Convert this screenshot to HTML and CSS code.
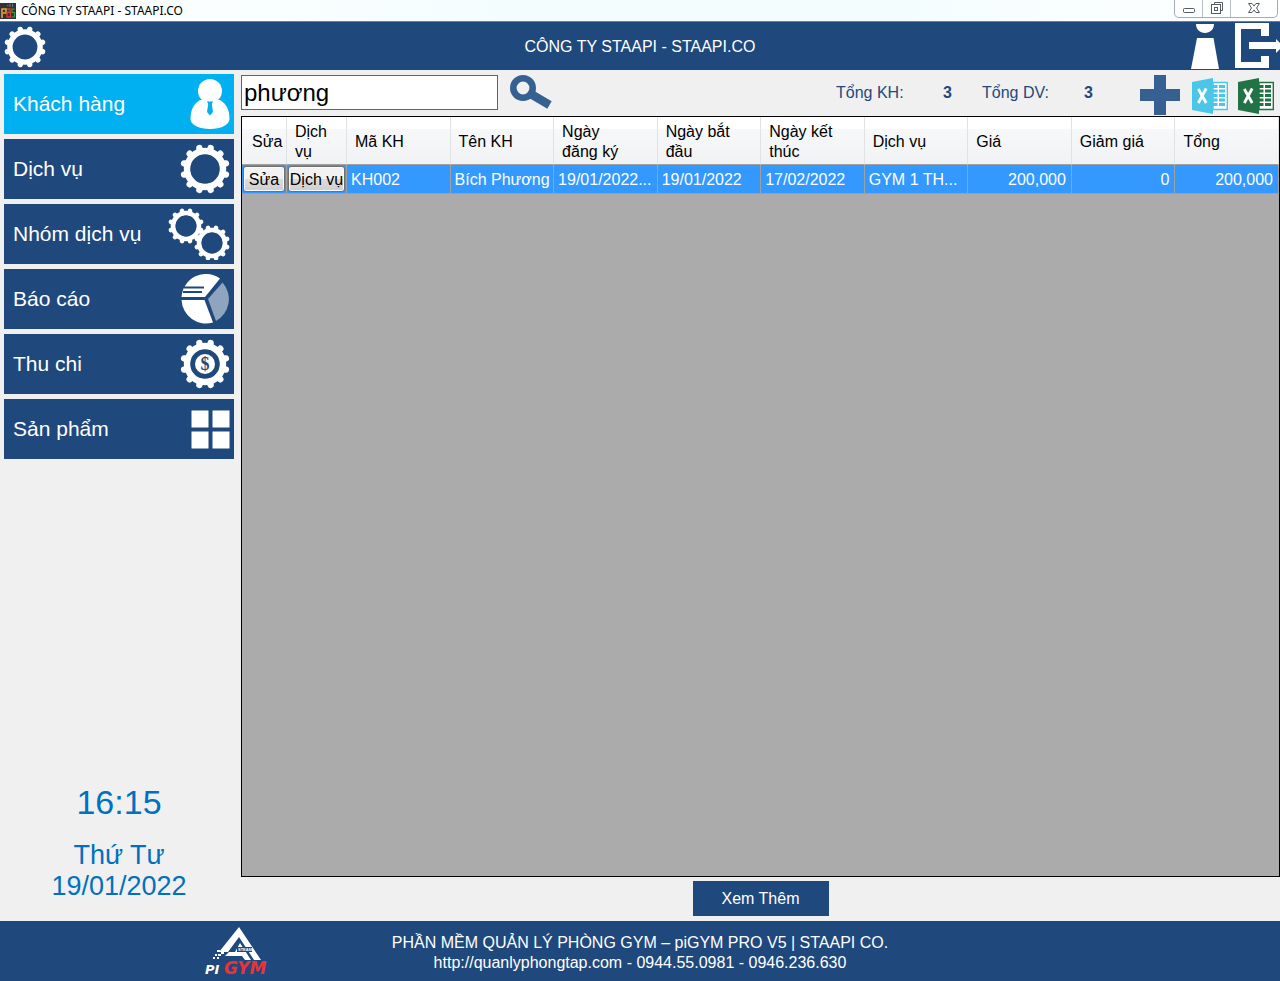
FILE: index.html
```html
<!DOCTYPE html>
<html lang="vi">
<head>
<meta charset="utf-8">
<meta name="viewport" content="width=device-width, initial-scale=1">
<title>CÔNG TY STAAPI - STAAPI.CO</title>
<link rel="stylesheet" href="styles.css">
</head>
<body>
<svg class="sprite" aria-hidden="true">
  <symbol id="gear" viewBox="-25 -25 50 50">
    <circle r="18" fill="none" stroke="#fff" stroke-width="6.400"/>
    <path fill="none" stroke="#fff" stroke-width="6.400" stroke-linecap="round" d="M4.700-17.600 5.600-20.900M13-13 15.300-15.300M17.600-4.700 20.900-5.600M17.600 4.700 20.900 5.600M13 13 15.300 15.300M4.700 17.600 5.600 20.900M-4.700 17.600-5.600 20.900M-13 13-15.300 15.300M-17.600 4.700-20.900 5.600M-17.600-4.700-20.900-5.600M-13-13-15.300-15.300M-4.700-17.600-5.600-20.900"/>
  </symbol>
  <symbol id="excel" viewBox="0 0 36 36">
    <path fill="currentColor" d="M0 4 21 0V36L0 32Z"/>
    <path fill="#fff" stroke="currentColor" stroke-width="1.400" d="M21 4.500H35.300V31.500H21Z"/>
    <path fill="currentColor" d="M21 7h4.500v3H21zM27 7h6v3h-6zM21 11.500h4.500v3H21zM27 11.500h6v3h-6zM21 16h4.500v3H21zM27 16h6v3h-6zM21 20.500h4.500v3H21zM27 20.500h6v3h-6zM21 25h4.500v3H21zM27 25h6v3h-6z"/>
    <path fill="none" stroke="#fff" stroke-width="2.800" d="M6.300 11 14.200 25M14.200 10.500 6.300 25"/>
  </symbol>
</svg>

<div class="titlebar">
  <svg class="app-icon" viewBox="0 0 16 16" aria-hidden="true">
    <rect width="16" height="16" fill="#333"/>
    <path d="M2 15V6h4v4H3" fill="none" stroke="#e8a33a" stroke-width="1.600"/>
    <path d="M7 6h3v3H7.500M7 9.500h3.500V14H7z" fill="none" stroke="#d0402c" stroke-width="1.300"/>
    <path d="M14.500 6H12v3.500h2.500V14H11.500" fill="none" stroke="#3f9a4c" stroke-width="1.200"/>
    <path d="M7 2.500h1.500M10 1v3M12.500 1v3" stroke="#777"/>
  </svg>
  <span class="window-title">CÔNG TY STAAPI - STAAPI.CO</span>
  <div class="window-buttons">
    <button class="win-btn" aria-label="Thu nhỏ"><svg width="14" height="14" viewBox="0 0 14 14"><rect x="1.500" y="7.500" width="11" height="4" rx="1" fill="#fff" stroke="#555c66"/></svg></button>
    <button class="win-btn" aria-label="Khôi phục"><svg width="14" height="14" viewBox="0 0 14 14"><path d="M4.500 1.500h8v8h-2v-6h-6z" fill="#fff" stroke="#555c66"/><rect x="1.500" y="3.500" width="9" height="9" fill="#fff" stroke="#555c66"/><rect x="4.500" y="6.500" width="3" height="3" fill="#fff" stroke="#555c66"/></svg></button>
    <button class="win-btn win-close" aria-label="Đóng"><svg width="14" height="14" viewBox="0 0 14 14"><path d="M1.500 2.500H5L7 5 9 2.500h3.500L9.500 7l3 4.500H9L7 9l-2 2.500H1.500L4.500 7z" fill="#fff" stroke="#555c66"/></svg></button>
  </div>
</div>

<header class="header">
  <button class="icon-btn settings" aria-label="Cài đặt"><svg width="42" height="42"><use href="#gear"/></svg></button>
  <h1 class="company">CÔNG TY STAAPI - STAAPI.CO</h1>
  <div class="header-actions">
    <button class="icon-btn" aria-label="Tài khoản"><svg width="30" height="48" viewBox="0 0 30 48"><path fill="#fff" d="M6 2H24C24 7.500 20 11 15 11S6 7.500 6 2ZM7 16H23.500L29 47H1Z"/></svg></button>
    <button class="icon-btn" aria-label="Đăng xuất"><svg width="46" height="48" viewBox="0 0 46 48"><path fill="#fff" d="M1 1H35V14H27V7H7V40H27V34H35V46H1Z"/><path fill="#fff" d="M15 20H42V17L46 21V27L42 31V27H15Z"/></svg></button>
  </div>
</header>

<div class="body">
  <aside class="sidebar">
    <nav class="menu">
      <button class="menu-item active">Khách hàng
        <svg width="40" height="50" viewBox="0 0 40 50"><circle cx="20" cy="12" r="12" fill="#fff"/><path fill="#fff" d="M10 21C3 25 .5 32 .5 40c0 6 9 10 19.500 10s19.500-4 19.500-10c0-8-2.500-15-9.500-19z"/><path fill="#00b0f0" d="M17 22.500h6l-1.200 2.500 1.200 8-3 3.500-3-3.500 1.200-8z"/></svg>
      </button>
      <button class="menu-item">Dịch vụ
        <svg width="50" height="50"><use href="#gear"/></svg>
      </button>
      <button class="menu-item">Nhóm dịch vụ
        <svg width="62" height="52" viewBox="0 0 62 52"><use href="#gear" width="36" height="36"/><use href="#gear" x="26" y="17" width="36" height="36"/></svg>
      </button>
      <button class="menu-item">Báo cáo
        <svg width="49" height="50" viewBox="0 0 49 50"><path fill="#fff" d="M24 23H.5A24.500 25 0 0 1 39 4.500Z"/><path fill="#fff" d="M.5 26H23.500L32 48.500A24.500 25 0 0 1 .5 26Z"/><path fill="#8fa4be" d="M41.500 8.500A25 25 0 0 1 35 47L27 25Z"/><path stroke="#1f497d" stroke-width="2" d="M3 13.500H23M2 18H21"/></svg>
      </button>
      <button class="menu-item">Thu chi
        <svg width="50" height="50" viewBox="0 0 50 50"><use href="#gear" width="50" height="50"/><circle cx="25" cy="25" r="10" fill="#fff"/><text class="coin" x="25" y="31" text-anchor="middle">$</text></svg>
      </button>
      <button class="menu-item">Sản phẩm
        <svg width="39" height="39" viewBox="0 0 39 39"><path fill="#fff" d="M.5.5h17v17H.5zM21.500.5h17v17h-17zM.5 21.500h17v17H.5zM21.500 21.500h17v17h-17z"/></svg>
      </button>
    </nav>
    <div class="clock">
      <time class="clock-time">16:15</time>
      <div class="clock-date">Thứ Tư<br>19/01/2022</div>
    </div>
  </aside>

  <main class="main">
    <div class="toolbar">
      <input class="search" type="text" value="phương" aria-label="Tìm kiếm">
      <button class="icon-btn find" aria-label="Tìm"><svg width="44" height="36" viewBox="0 0 44 36"><circle cx="14" cy="13" r="9.700" fill="none" stroke="#376092" stroke-width="6.600"/><path stroke="#376092" stroke-width="8.500" d="M21 18.500 40.500 30"/></svg></button>
      <dl class="stats">
        <dt>Tổng KH:</dt><dd>3</dd>
        <dt>Tổng DV:</dt><dd>3</dd>
      </dl>
      <div class="tools">
        <button class="icon-btn" aria-label="Thêm"><svg width="40" height="40" viewBox="0 0 40 40"><path fill="#376092" d="M14 0H26V14H40V26H26V40H14V26H0V14H14Z"/></svg></button>
        <button class="icon-btn excel-blue" aria-label="Nhập Excel"><svg width="36" height="36"><use href="#excel"/></svg></button>
        <button class="icon-btn excel-green" aria-label="Xuất Excel"><svg width="36" height="36"><use href="#excel"/></svg></button>
      </div>
    </div>

    <div class="grid-box">
      <table class="grid">
        <colgroup><col class="col-edit"><col class="col-service"><col span="9"></colgroup>
        <thead>
          <tr><th>Sửa</th><th>Dịch vụ</th><th>Mã KH</th><th>Tên KH</th><th>Ngày<br>đăng ký</th><th>Ngày bắt đầu</th><th>Ngày kết thúc</th><th>Dịch vụ</th><th>Giá</th><th>Giảm giá</th><th>Tổng</th></tr>
        </thead>
        <tbody>
          <tr><td class="action"><button class="cell-btn">Sửa</button></td><td class="action"><button class="cell-btn">Dịch vụ</button></td><td>KH002</td><td>Bích Phương</td><td>19/01/2022...</td><td>19/01/2022</td><td>17/02/2022</td><td>GYM 1 TH...</td><td class="num">200,000</td><td class="num">0</td><td class="num">200,000</td></tr>
        </tbody>
      </table>
    </div>
    <button class="more">Xem Thêm</button>
  </main>
</div>

<footer class="footer">
  <svg class="logo" width="74" height="54" viewBox="0 0 74 54" role="img" aria-label="piGYM">
    <path fill="#fff" d="M36 3 58 36H51L36 13 25 28H16Z"/>
    <path fill="#fff" d="M37 19 48 36H42L39 32H22L26 28H32Z"/>
    <path fill="#1f497d" d="M34 23H49V28H34Z"/>
    <text class="logo-tiny" x="35" y="27">STEAM</text>
    <path fill="#fff" d="M14 26h3v2h-3zM18 28h3v2h-3zM12 30h2v2h-2zM15 30h3v2h-3zM10 33h2v2h-2zM14 33h2v2h-2z"/>
    <text class="logo-pi" x="2" y="50">PI</text>
    <text class="logo-gym" x="21" y="50">GYM</text>
  </svg>
  <p class="footer-text">PHẦN MỀM QUẢN LÝ PHÒNG GYM – piGYM PRO V5 | STAAPI CO.<br>http://quanlyphongtap.com - 0944.55.0981 - 0946.236.630</p>
</footer>
</body>
</html>
```
FILE: styles.css
```css
* { box-sizing: border-box; }

body {
  margin: 0;
  min-height: 100vh;
  display: flex;
  flex-direction: column;
  background: #f0f0f0;
  font: 16px/20px "Liberation Sans", Arial, sans-serif;
  color: #000;
}

button { font: inherit; cursor: pointer; }
svg { display: block; flex: none; }
.sprite { position: absolute; width: 0; height: 0; }
.icon-btn { display: block; padding: 0; border: 0; background: none; }

/* Window title bar */
.titlebar {
  display: flex;
  align-items: flex-start;
  height: 22px;
  background: linear-gradient(90deg, #fff, #f4fdfe 40%, #f4fdfe 70%, #fff);
  border-bottom: 1px solid #6d7f8c;
}
.app-icon { width: 16px; height: 16px; margin-top: 3px; }
.window-title {
  margin-left: 5px;
  font: 12px/21px "Noto Sans", sans-serif;
}
.window-buttons {
  display: flex;
  margin: 0 2px 0 auto;
  border: 1px solid #a3acb3;
  border-top: 0;
  border-radius: 0 0 5px 5px;
}
.win-btn {
  display: flex;
  justify-content: center;
  width: 28px;
  height: 17px;
  padding: 1px 0 0;
  border: 0;
  border-right: 1px solid #b8c0c6;
  background: none;
}
.win-close { width: 46px; border-right: 0; }

/* Header */
.header {
  display: grid;
  grid-template-columns: 1fr auto 1fr;
  align-items: center;
  height: 48px;
  background: #1f497d;
  color: #fff;
}
.settings { margin: 2px 0 0 4px; justify-self: start; }
.company { margin: 2px 0 0; font-size: 16px; font-weight: normal; }
.header-actions { display: flex; justify-content: flex-end; gap: 14px; }

.body { display: flex; flex: 1; }

/* Sidebar */
.sidebar {
  display: flex;
  flex-direction: column;
  flex: none;
  width: 241px;
  padding: 4px 7px 19px 4px;
}
.menu { display: flex; flex-direction: column; gap: 5px; }
.menu-item {
  display: flex;
  align-items: center;
  justify-content: space-between;
  height: 60px;
  padding: 0 4px 0 9px;
  border: 0;
  background: #1f497d;
  color: #fff;
  font-size: 21px;
}
.menu-item.active { background: #00b0f0; }
.coin { font: bold 18px "Liberation Serif", serif; fill: #1f497d; }
.clock { margin-top: auto; text-align: center; color: #0070c0; }
.clock-time { display: block; margin-bottom: 18px; font-size: 34px; line-height: 40px; }
.clock-date { font-size: 27px; line-height: 31px; }

/* Main area */
.main { display: flex; flex-direction: column; flex: 1; min-width: 0; }
.toolbar { display: flex; align-items: flex-start; height: 46px; padding: 5px 6px 0 0; }
.search {
  width: 257px;
  height: 35px;
  padding: 0 2px;
  border: 1px solid #646464;
  background: #fff;
  font: 24px "Liberation Sans", Arial, sans-serif;
}
.find { margin-left: 11px; }
.stats { display: flex; margin: 8px 0 0 auto; color: #1f497d; }
.stats dt { width: 107px; }
.stats dd { margin: 0 28px 0 0; width: 11px; font-weight: bold; }
.stats dt:last-of-type { width: 102px; }
.stats dd:last-of-type { margin-right: 45px; }
.tools { display: flex; gap: 12px; }
.excel-blue { margin-top: 1px; color: #4bc5e8; }
.excel-green { margin: 2px 0 0 -2px; color: #217346; }

.grid-box { flex: 1; border: 1px solid #000; background: #ababab; }
.grid { width: 100%; table-layout: fixed; border-collapse: separate; border-spacing: 0; }
.col-edit { width: 45px; }
.col-service { width: 60px; }
.grid th {
  height: 48px;
  padding: 2px 4px 0 8px;
  border-right: 1px solid #e0e2e4;
  border-bottom: 1px solid #a0a0a0;
  background: linear-gradient(#fff 0 25%, #f7f8fa 25%, #f1f2f4);
  font-weight: normal;
  text-align: left;
}
.grid th:first-child { padding: 2px 0 0 10px; }
.grid td {
  height: 29px;
  padding: 2px 5px 0 4px;
  overflow: hidden;
  border-right: 1px solid #a0a0a0;
  border-bottom: 1px solid #a0a0a0;
  background: #3399ff;
  color: #fff;
  white-space: nowrap;
}
.grid .action { padding: 1px; }
.grid .num { text-align: right; }
.cell-btn {
  display: block;
  width: 100%;
  height: 26px;
  padding: 2px 0 0;
  border: 1px solid #707070;
  border-radius: 3px;
  background: linear-gradient(#f2f2f2 0 50%, #dcdcdc 50%, #cfcfcf);
  box-shadow: inset 0 0 0 1px #fafafa;
  color: #000;
}

.more {
  align-self: center;
  width: 136px;
  height: 35px;
  margin: 4px 0 5px;
  border: 0;
  background: #1f497d;
  color: #fff;
}

/* Footer */
.footer {
  display: grid;
  grid-template-columns: 1fr auto 1fr;
  align-items: center;
  height: 60px;
  background: #1f497d;
  color: #fff;
}
.logo { justify-self: end; margin-right: 115px; }
.logo-pi { font: italic bold 13px "DejaVu Sans", sans-serif; fill: #fff; }
.logo-gym { font: italic bold 17px "DejaVu Sans", sans-serif; fill: #ed3237; }
.logo-tiny { font: bold 4px "Liberation Sans", sans-serif; fill: #fff; }
.footer-text { margin: 3px 0 0; text-align: center; }
```
